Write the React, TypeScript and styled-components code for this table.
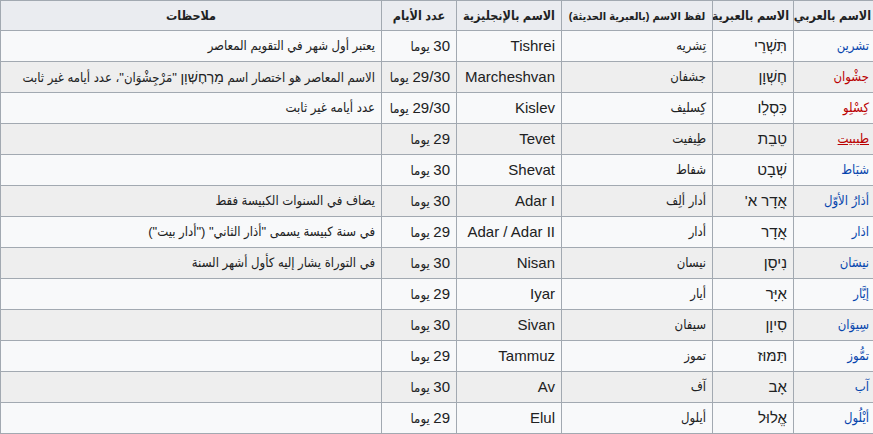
import React from "react";
import styled, { createGlobalStyle } from "styled-components";

const GlobalStyle = createGlobalStyle`
  html, body { margin: 0; padding: 0; background: #ffffff; }
  body {
    overflow: hidden;
    font-family: "Liberation Sans", "DejaVu Sans Condensed", "DejaVu Sans", Arial, sans-serif;
    color: #202122;
  }
`;

const Viewport = styled.div`
  width: 873px;
  height: 434px;
  overflow: hidden;
`;

const Table = styled.table`
  width: 875px;
  table-layout: fixed;
  border-collapse: collapse;
  border: 1px solid #a2a9b1;
  background: #f8f9fa;
  font-size: 13px;
  color: #202122;
`;

const HeadCell = styled.th<{ $compact?: boolean }>`
  background: #eaecf0;
  border: 1px solid #a2a9b1;
  font-weight: bold;
  font-size: ${(p) => (p.$compact ? "11px" : "12.5px")};
  text-align: center;
  height: 30px;
  padding: 0 ${(p) => (p.$compact ? "1px" : "4px")};
  line-height: 20px;
  white-space: nowrap;
  overflow: hidden;
  box-sizing: border-box;
`;

const Row = styled.tr<{ $striped: boolean }>`
  background: ${(p) => (p.$striped ? "#eeeeee" : "#f8f9fa")};
`;

const Cell = styled.td<{ $latin?: boolean }>`
  border: 1px solid #a2a9b1;
  height: 31px;
  padding: 0 6px;
  line-height: 20px;
  text-align: right;
  white-space: nowrap;
  overflow: hidden;
  box-sizing: border-box;
  font-size: ${(p) => (p.$latin ? "15px" : "13px")};
`;

const HebrewText = styled.span`
  font-size: 14px;
`;

const Num = styled.span`
  font-size: 15px;
`;

const MonthLink = styled.a<{ $missing?: boolean; $underline?: boolean }>`
  color: ${(p) => (p.$missing ? "#ba0000" : "#0645ad")};
  text-decoration: ${(p) => (p.$underline ? "underline" : "none")};
`;

type Month = {
  ar: string;
  missing?: boolean;
  underline?: boolean;
  he: string;
  pron: string;
  en: string;
  days: string;
  note: React.ReactNode;
};

const months: Month[] = [
  { ar: "تشرين", he: "תִּשְׁרֵי", pron: "تِشريه", en: "Tishrei", days: "30", note: "يعتبر أول شهر في التقويم المعاصر" },
  {
    ar: "جشْوان",
    missing: true,
    he: "חֶשְׁוָן",
    pron: "جشفان",
    en: "Marcheshvan",
    days: "29/30",
    note: (
      <>
        الاسم المعاصر هو اختصار اسم <HebrewText>מַרְחֶשְׁוָן</HebrewText> "مَرْجِشْوَان"، عدد أيامه غير ثابت
      </>
    ),
  },
  { ar: "كِسْلِو", missing: true, he: "כִּסְלֵו", pron: "كِسليف", en: "Kislev", days: "29/30", note: "عدد أيامه غير ثابت" },
  { ar: "طيبيت", missing: true, underline: true, he: "טֵבֵת", pron: "طِيفيت", en: "Tevet", days: "29", note: "" },
  { ar: "شبَاط", he: "שְׁבָט", pron: "شفاط", en: "Shevat", days: "30", note: "" },
  { ar: "أذارُ الأوّل", he: "אֲדָר א'", pron: "أدار ألِف", en: "Adar I", days: "30", note: "يضاف في السنوات الكبيسة فقط" },
  { ar: "اذار", he: "אֲדָר", pron: "أدار", en: "Adar / Adar II", days: "29", note: "في سنة كبيسة يسمى \"أذار الثاني\" (\"أدار بيت\")" },
  { ar: "نيسَان", he: "נִיסָן", pron: "نيسان", en: "Nisan", days: "30", note: "في التوراة يشار إليه كأول أشهر السنة" },
  { ar: "إيَّار", he: "אִיָּר", pron: "أيار", en: "Iyar", days: "29", note: "" },
  { ar: "سِيوَان", he: "סִיוָן", pron: "سيفان", en: "Sivan", days: "30", note: "" },
  { ar: "تمُّوز", he: "תַּמּוּז", pron: "تموز", en: "Tammuz", days: "29", note: "" },
  { ar: "آب", he: "אָב", pron: "آف", en: "Av", days: "30", note: "" },
  { ar: "أيْلُول", he: "אֱלוּל", pron: "أيلول", en: "Elul", days: "29", note: "" },
];

const headers = [
  { text: "الاسم بالعربي" },
  { text: "الاسم بالعبرية" },
  { text: "لفظ الاسم (بالعبرية الحديثة)", compact: true },
  { text: "الاسم بالإنجليزية" },
  { text: "عدد الأيام" },
  { text: "ملاحظات" },
];

const widths = [82, 81, 151, 105, 75, 381];

export default function App() {
  return (
    <>
      <GlobalStyle />
      <Viewport>
        <Table dir="rtl">
          <colgroup>
            {widths.map((w, i) => (
              <col key={i} style={{ width: w }} />
            ))}
          </colgroup>
          <thead>
            <tr>
              {headers.map((h) => (
                <HeadCell key={h.text} $compact={h.compact}>
                  {h.text}
                </HeadCell>
              ))}
            </tr>
          </thead>
          <tbody>
            {months.map((m, i) => (
              <Row key={m.en} $striped={i % 2 === 1}>
                <Cell>
                  <MonthLink href="#" $missing={m.missing} $underline={m.underline}>
                    {m.ar}
                  </MonthLink>
                </Cell>
                <Cell $latin>{m.he}</Cell>
                <Cell>{m.pron}</Cell>
                <Cell $latin>{m.en}</Cell>
                <Cell>
                  <Num>{m.days}</Num> يوما
                </Cell>
                <Cell>{m.note}</Cell>
              </Row>
            ))}
          </tbody>
        </Table>
      </Viewport>
    </>
  );
}
